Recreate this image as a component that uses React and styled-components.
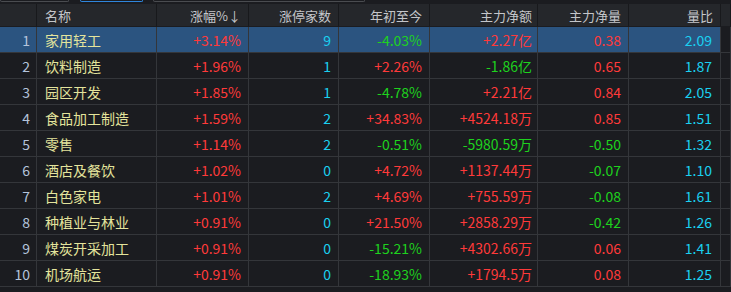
import styled, { createGlobalStyle } from 'styled-components';

const GlobalStyle = createGlobalStyle`
  html, body {
    margin: 0;
    padding: 0;
    background: #1b1c20;
  }
  body {
    font-family: "Noto Sans CJK SC", "Noto Sans", sans-serif;
  }
`;

const colors = {
  red: '#ff3a3a',
  green: '#1ed21e',
  cyan: '#1ad0f0',
  name: '#e4e49c',
  index: '#b4c4dc',
  head: '#c4c6ca',
  line: '#34363a',
};

const Page = styled.div`
  width: 731px;
  height: 292px;
  overflow: hidden;
  background: #1b1c20;
`;

const TabStrip = styled.div`
  height: 4px;
  display: flex;
  align-items: flex-start;
  background: #1b1c20;
`;

const Tab = styled.div`
  height: 2px;
  width: ${(p) => p.w}px;
  margin-left: ${(p) => p.ml}px;
  box-sizing: border-box;
  border: 1px solid ${(p) => (p.active ? '#2f86dc' : '#4a4c50')};
  border-top: none;
  border-radius: 0 0 2px 2px;
`;

const Grid = styled.div`
  display: grid;
  grid-template-columns: 37px 120px 92px 90px 91px 108px 91px 92px 10px;
`;

const Cell = styled.div`
  height: 26px;
  display: flex;
  align-items: center;
  justify-content: ${(p) => (p.left ? 'flex-start' : 'flex-end')};
  padding: ${(p) => (p.left ? '0 0 0 8px' : `0 ${p.pr ?? 7}px 0 0`)};
  box-sizing: border-box;
  border-right: 1px solid ${colors.line};
  border-bottom: 1px solid ${colors.line};
  font-size: 14px;
  white-space: nowrap;
  color: ${(p) => p.color || colors.head};
  background: ${(p) => (p.sel ? '#2b5480' : 'transparent')};
`;

const HeadCell = styled(Cell)`
  height: 23px;
  font-size: 13px;
  background: #25272b;
  color: ${colors.head};
  border-right: 1px solid #18191c;
  border-bottom: 1px solid #1b1c20;
`;

const rows = [
  ['家用轻工', '+3.14%', '9', '-4.03%', '+2.27亿', '0.38', '2.09'],
  ['饮料制造', '+1.96%', '1', '+2.26%', '-1.86亿', '0.65', '1.87'],
  ['园区开发', '+1.85%', '1', '-4.78%', '+2.21亿', '0.84', '2.05'],
  ['食品加工制造', '+1.59%', '2', '+34.83%', '+4524.18万', '0.85', '1.51'],
  ['零售', '+1.14%', '2', '-0.51%', '-5980.59万', '-0.50', '1.32'],
  ['酒店及餐饮', '+1.02%', '0', '+4.72%', '+1137.44万', '-0.07', '1.10'],
  ['白色家电', '+1.01%', '2', '+4.69%', '+755.59万', '-0.08', '1.61'],
  ['种植业与林业', '+0.91%', '0', '+21.50%', '+2858.29万', '-0.42', '1.26'],
  ['煤炭开采加工', '+0.91%', '0', '-15.21%', '+4302.66万', '0.06', '1.41'],
  ['机场航运', '+0.91%', '0', '-18.93%', '+1794.5万', '0.08', '1.25'],
];

const signColor = (v) => (v.startsWith('-') ? colors.green : colors.red);

const headers = ['', '名称', '涨幅%↓', '涨停家数', '年初至今', '主力净额', '主力净量', '量比', ''];

const App = () => {
  return (
    <Page>
      <GlobalStyle />
      <TabStrip>
        <Tab w={69} ml={0} />
        <Tab w={63} ml={11} active />
        <Tab w={212} ml={10} />
      </TabStrip>
      <Grid>
        {headers.map((h, i) => (
          <HeadCell key={i} left={i === 1} pr={i === 5 ? 5 : 7}>
            {h}
          </HeadCell>
        ))}
        {rows.map((r, idx) => {
          const sel = idx === 0;
          const [name, chg, limit, ytd, amt, vol, ratio] = r;
          return [
            <Cell key={`i${idx}`} sel={sel} color={colors.index} pr={6}>
              {idx + 1}
            </Cell>,
            <Cell key={`n${idx}`} sel={sel} left color={colors.name}>
              {name}
            </Cell>,
            <Cell key={`c${idx}`} sel={sel} color={signColor(chg)}>
              {chg}
            </Cell>,
            <Cell key={`l${idx}`} sel={sel} color={colors.cyan}>
              {limit}
            </Cell>,
            <Cell key={`y${idx}`} sel={sel} color={signColor(ytd)}>
              {ytd}
            </Cell>,
            <Cell key={`a${idx}`} sel={sel} color={signColor(amt)} pr={5}>
              {amt}
            </Cell>,
            <Cell key={`v${idx}`} sel={sel} color={signColor(vol)}>
              {vol}
            </Cell>,
            <Cell key={`r${idx}`} sel={sel} color={colors.cyan} pr={8}>
              {ratio}
            </Cell>,
            <Cell key={`e${idx}`} />,
          ];
        })}
      </Grid>
    </Page>
  );
};

export default App;
